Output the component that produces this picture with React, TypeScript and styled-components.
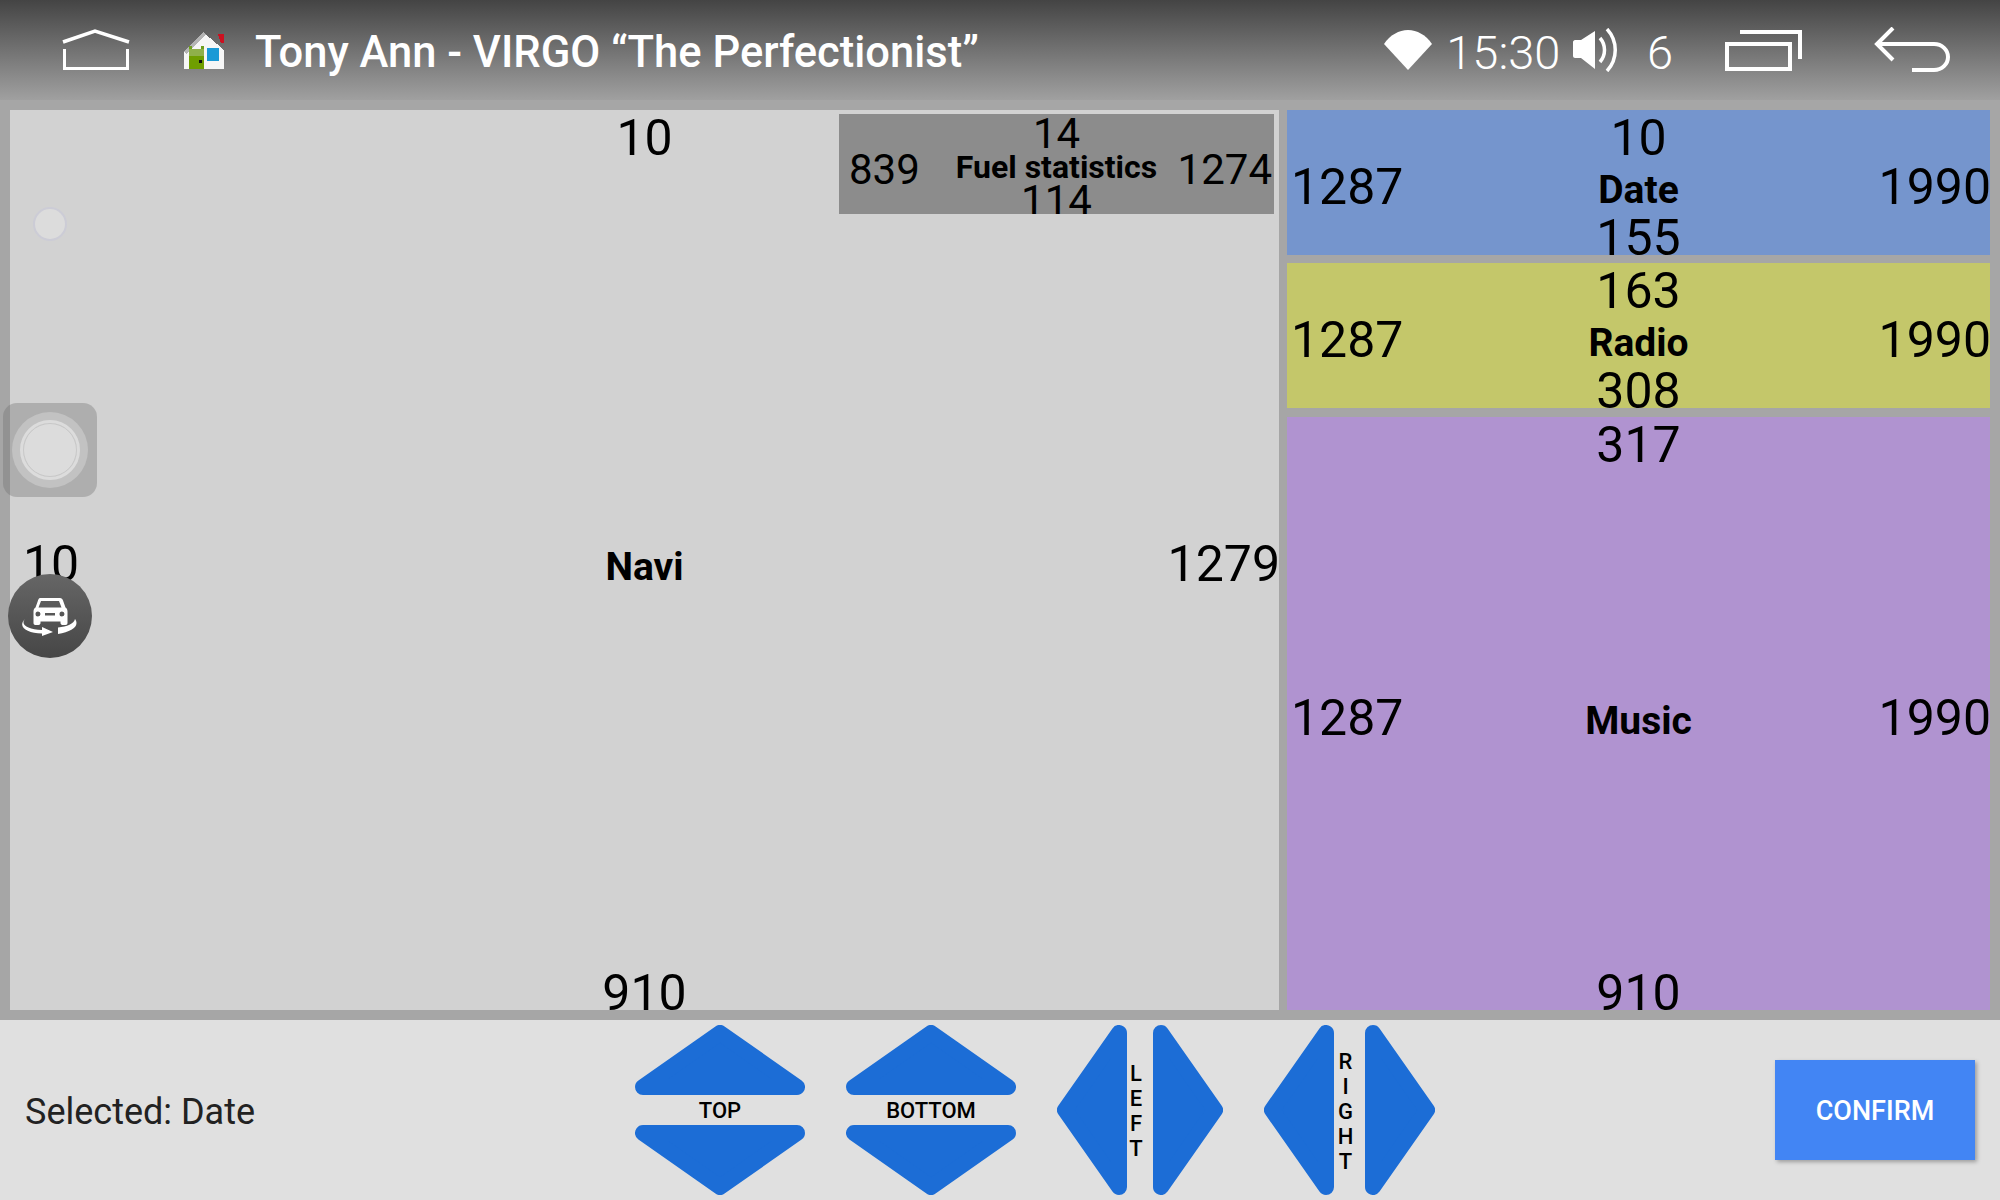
import React from 'react';
import styled, { createGlobalStyle } from 'styled-components';

const GlobalStyle = createGlobalStyle`
  html, body {
    margin: 0;
    padding: 0;
    background: #a6a6a6;
  }
  body {
    font-family: Roboto, "Liberation Sans", sans-serif;
  }
`;

const BLUE = '#1c6dd6';

interface Bounds {
  top: string;
  left: string;
  right: string;
  bottom: string;
}

const HomeIcon = () => (
  <svg width="68" height="42" viewBox="0 0 68 42" fill="none" stroke="#fff" strokeWidth="3">
    <path d="M1 13L33 2l34 11" strokeWidth="3.500" />
    <path d="M2.500 20v19.500h63V20" />
  </svg>
);

const AppIcon = () => (
  <svg width="42" height="38" viewBox="0 0 42 38" shapeRendering="crispEdges">
    <path d="M0 38V20L19 1l21 18v19z" fill="#f6f6f6" />
    <path d="M0 20L19 1l3 3L2 23z" fill="#b4b4b4" />
    <rect x="5" y="18" width="15" height="7" fill="#8fb04a" />
    <rect x="5" y="15" width="3" height="3" fill="#6f9e1e" />
    <rect x="17" y="15" width="3" height="3" fill="#6f9e1e" />
    <rect x="5" y="25" width="15" height="13" fill="#6f9e00" />
    <rect x="15" y="29" width="3" height="3" fill="#111" />
    <rect x="23" y="17" width="12" height="13" fill="#1a9ad6" />
    <path d="M34 3h6v9h-3z" fill="#cc1020" />
  </svg>
);

const WifiIcon = () => (
  <svg width="48" height="40" viewBox="0 0 48 40">
    <path d="M0 14C6 5 15 0 24 0s18 5 24 14L24 40z" fill="#fff" />
  </svg>
);

const VolumeIcon = () => (
  <svg width="47" height="44" viewBox="0 0 47 44" fill="none">
    <path d="M0 14c0-1 1-2 2-2h6L22 3v38L8 30H2c-1 0-2-1-2-2z" fill="#fff" />
    <path d="M27 10c6 7 6 17 0 24" stroke="#fff" strokeWidth="3.500" />
    <path d="M34 1c11 12 11 30 0 42" stroke="#fff" strokeWidth="3.500" />
  </svg>
);

const RecentsIcon = () => (
  <svg width="78" height="42" viewBox="0 0 78 42" fill="none" stroke="#fff" strokeWidth="4">
    <rect x="3" y="15" width="63" height="25" />
    <path d="M16 3h60v27" />
  </svg>
);

const BackIcon = () => (
  <svg width="76" height="46" viewBox="0 0 76 46" fill="none" stroke="#fff" strokeWidth="4">
    <path d="M19 1L3 17l16 16" />
    <path d="M3 17h57c8 0 14 6 14 13s-6 13-14 13H38" />
  </svg>
);

const CarIcon = () => (
  <svg width="56" height="40" viewBox="0 0 56 40" fill="#fff">
    <path
      fillRule="evenodd"
      d="M18 2h20c1.500 0 2.500 1 3 2.500l2.500 7c1.500 1 2 2.500 2 4V27c0 1-.7 2-2 2h-3c-1 0-2-1-2-2v-1.500H18.500V27c0 1-1 2-2 2h-3c-1.300 0-2-1-2-2V15.500c0-1.500.5-3 2-4L16 4.500C16.500 3 17 2 18 2zm1 3l-2.500 6.500h23L37 5zm-3 10.500a2.500 2.500 0 100 5 2.500 2.500 0 000-5zm24 0a2.500 2.500 0 100 5 2.500 2.500 0 000-5zM23 17v2.500h10V17z"
    />
    <path d="M3 23C-2 29 6 33 20 34v-3l11 5-11 4v-2.500C5 37-5 31 3 23z" />
    <path d="M53 23c5 7-3 13-17 15v-6.500c9-1 16-3.500 17-8.500z" />
  </svg>
);

// rounded triangles, the round join of the stroke gives the soft corners
const arrowPoints: Record<string, { box: string; points: string }> = {
  up: { box: '0 0 170 70', points: '85,8 162,62 8,62' },
  down: { box: '0 0 170 70', points: '8,8 162,8 85,62' },
  left: { box: '0 0 70 170', points: '8,85 62,8 62,162' },
  right: { box: '0 0 70 170', points: '8,8 62,85 8,162' },
};

const Arrow: React.FC<{ dir: 'up' | 'down' | 'left' | 'right' }> = ({ dir }) => {
  const { box, points } = arrowPoints[dir];
  const flat = dir === 'up' || dir === 'down';
  return (
    <svg width={flat ? 170 : 70} height={flat ? 70 : 170} viewBox={box}>
      <polygon points={points} fill={BLUE} stroke={BLUE} strokeWidth="16" strokeLinejoin="round" />
    </svg>
  );
};

const Bounded: React.FC<{ name: string; bounds: Bounds; small?: boolean }> = ({ name, bounds, small }) => (
  <>
    <TopValue $small={small}>{bounds.top}</TopValue>
    <LeftValue $small={small}>{bounds.left}</LeftValue>
    <Name $small={small}>{name}</Name>
    <RightValue $small={small}>{bounds.right}</RightValue>
    <BottomValue $small={small}>{bounds.bottom}</BottomValue>
  </>
);

const App: React.FC = () => {
  return (
    <Screen>
      <GlobalStyle />
      <StatusBar>
        <HomeSlot>
          <HomeIcon />
        </HomeSlot>
        <AppSlot>
          <AppIcon />
        </AppSlot>
        <Title>Tony Ann - VIRGO “The Perfectionist”</Title>
        <WifiSlot>
          <WifiIcon />
        </WifiSlot>
        <Clock>15:30</Clock>
        <VolumeSlot>
          <VolumeIcon />
        </VolumeSlot>
        <VolumeLevel>6</VolumeLevel>
        <RecentsSlot>
          <RecentsIcon />
        </RecentsSlot>
        <BackSlot>
          <BackIcon />
        </BackSlot>
      </StatusBar>

      <Editor>
        <NaviPanel>
          <Bounded name="Navi" bounds={{ top: '10', left: '10', right: '1279', bottom: '910' }} />
          <FuelPanel>
            <Bounded small name="Fuel statistics" bounds={{ top: '14', left: '839', right: '1274', bottom: '114' }} />
          </FuelPanel>
        </NaviPanel>
        <SideColumn>
          <SidePanel $color="#7595cd" $height={145}>
            <Bounded name="Date" bounds={{ top: '10', left: '1287', right: '1990', bottom: '155' }} />
          </SidePanel>
          <SidePanel $color="#c4c76a" $height={145}>
            <Bounded name="Radio" bounds={{ top: '163', left: '1287', right: '1990', bottom: '308' }} />
          </SidePanel>
          <SidePanel $color="#b093d0" $height={593}>
            <Bounded name="Music" bounds={{ top: '317', left: '1287', right: '1990', bottom: '910' }} />
          </SidePanel>
        </SideColumn>
        <SmallDot />
        <AssistButton>
          <AssistRing>
            <AssistCore />
          </AssistRing>
        </AssistButton>
        <CarButton>
          <CarIcon />
        </CarButton>
      </Editor>

      <ControlBar>
        <Selected>Selected: Date</Selected>
        <Nudges>
          <NudgeColumn>
            <Arrow dir="up" />
            <FlatLabel>TOP</FlatLabel>
            <Arrow dir="down" />
          </NudgeColumn>
          <NudgeColumn>
            <Arrow dir="up" />
            <FlatLabel>BOTTOM</FlatLabel>
            <Arrow dir="down" />
          </NudgeColumn>
          <NudgeRow>
            <Arrow dir="left" />
            <StackLabel $width={26}>LEFT</StackLabel>
            <Arrow dir="right" />
          </NudgeRow>
          <NudgeRow>
            <Arrow dir="left" />
            <StackLabel $width={31}>RIGHT</StackLabel>
            <Arrow dir="right" />
          </NudgeRow>
        </Nudges>
        <ConfirmButton>CONFIRM</ConfirmButton>
      </ControlBar>
    </Screen>
  );
};

export default App;

const Screen = styled.div`
  width: 2000px;
  height: 1200px;
  overflow: hidden;
  display: flex;
  flex-direction: column;
`;

const StatusBar = styled.header`
  height: 100px;
  flex: none;
  display: flex;
  align-items: center;
  color: #fff;
  background: linear-gradient(#444444, #a0a0a0);
`;

const IconSlot = styled.div`
  display: flex;
  flex: none;
`;

const HomeSlot = styled(IconSlot)`
  margin: 0 0 0 62px;
`;

const AppSlot = styled(IconSlot)`
  margin: 0 0 0 54px;
`;

const Title = styled.div`
  margin: 4px 0 0 29px;
  font-size: 43.500px;
  font-weight: 500;
  white-space: nowrap;
`;

const WifiSlot = styled(IconSlot)`
  margin-left: auto;
`;

const Clock = styled.div`
  margin: 4px 0 0 14px;
  font-size: 47px;
  font-weight: 300;
`;

const VolumeSlot = styled(IconSlot)`
  margin-left: 13px;
`;

const VolumeLevel = styled.div`
  margin: 4px 0 0 26.500px;
  font-size: 47px;
  font-weight: 300;
`;

const RecentsSlot = styled(IconSlot)`
  margin-left: 51px;
`;

const BackSlot = styled(IconSlot)`
  margin: 0 50px 0 72px;
`;

const Editor = styled.main`
  position: relative;
  height: 920px;
  flex: none;
  box-sizing: border-box;
  padding: 10px;
  display: grid;
  grid-template-columns: 1269px 703px;
  column-gap: 8px;
  background: #a6a6a6;
`;

const Panel = styled.section`
  display: grid;
  overflow: hidden;
  color: #000;
`;

const SideColumn = styled.div`
  display: flex;
  flex-direction: column;
  gap: 8px;
`;

const SidePanel = styled(Panel)<{ $color: string; $height: number }>`
  height: ${(p) => p.$height}px;
  background: ${(p) => p.$color};

  &:last-child {
    margin-top: 1px;
  }
`;

const FuelPanel = styled(Panel)`
  grid-area: 1 / 1;
  justify-self: end;
  align-self: start;
  width: 435px;
  height: 100px;
  margin: 4px 5px 0 0;
  background: #8c8c8c;
`;

// all the values of a panel share the one grid cell and sit on its edges
const Value = styled.div<{ $small?: boolean }>`
  grid-area: 1 / 1;
  font-size: ${(p) => (p.$small ? 42 : 50)}px;
  line-height: ${(p) => (p.$small ? 46 : 58)}px;
  white-space: nowrap;
`;

const TopValue = styled(Value)`
  justify-self: center;
  align-self: start;
  margin-top: ${(p) => (p.$small ? -3 : -1)}px;
`;

const BottomValue = styled(Value)`
  justify-self: center;
  align-self: end;
  margin-bottom: ${(p) => (p.$small ? -10 : -12)}px;
`;

const LeftValue = styled(Value)`
  justify-self: start;
  align-self: center;
  margin-left: ${(p) => (p.$small ? 10 : 4)}px;
  margin-top: ${(p) => (p.$small ? 12 : 8)}px;
`;

const RightValue = styled(Value)`
  justify-self: end;
  align-self: center;
  margin-right: ${(p) => (p.$small ? 2 : -1)}px;
  margin-top: ${(p) => (p.$small ? 12 : 8)}px;
`;

const NaviPanel = styled(Panel)`
  background: #d2d2d2;

  > ${LeftValue} {
    margin-left: 13px;
  }
`;

const Name = styled.div<{ $small?: boolean }>`
  grid-area: 1 / 1;
  justify-self: center;
  align-self: center;
  margin-top: ${(p) => (p.$small ? 6 : 14)}px;
  font-size: ${(p) => (p.$small ? 32 : 39)}px;
  font-weight: 700;
  white-space: nowrap;
`;

const SmallDot = styled.div`
  position: absolute;
  left: 33px;
  top: 107px;
  width: 34px;
  height: 34px;
  box-sizing: border-box;
  border-radius: 50%;
  background: #dcdcdc;
  border: 2px solid #ccccd6;
`;

const AssistButton = styled.div`
  position: absolute;
  left: 3px;
  top: 303px;
  width: 94px;
  height: 94px;
  border-radius: 14px;
  background: rgba(110, 110, 110, 0.35);
  display: flex;
  align-items: center;
  justify-content: center;
`;

const AssistRing = styled.div`
  width: 76px;
  height: 76px;
  border-radius: 50%;
  background: #c2c2c2;
  display: flex;
  align-items: center;
  justify-content: center;
`;

const AssistCore = styled.div`
  width: 52px;
  height: 52px;
  border-radius: 50%;
  background: #dcdcdc;
  border: 1px solid #c8c8c8;
  outline: 3px solid #dcdcdc;
`;

const CarButton = styled.div`
  position: absolute;
  left: 8px;
  top: 474px;
  width: 84px;
  height: 84px;
  border-radius: 50%;
  background: linear-gradient(#666666, #464646);
  display: flex;
  align-items: center;
  justify-content: center;
`;

const ControlBar = styled.footer`
  flex: 1;
  display: flex;
  align-items: center;
  padding: 0 25px;
  background: #e0e0e0;
`;

const Selected = styled.div`
  flex: 0 0 610px;
  margin-top: 3px;
  font-size: 36px;
  color: #222;
`;

const Nudges = styled.div`
  display: flex;
  gap: 41px;
`;

const NudgeColumn = styled.div`
  display: flex;
  flex-direction: column;
  align-items: center;
`;

const NudgeRow = styled.div`
  display: flex;
  align-items: center;
`;

const FlatLabel = styled.div`
  height: 30px;
  line-height: 32px;
  font-size: 22px;
  font-weight: 500;
  color: #000;
`;

// one letter per line, the label is a little left of the gap's middle
const StackLabel = styled.div<{ $width: number }>`
  box-sizing: border-box;
  width: ${(p) => p.$width}px;
  padding: 2px ${(p) => (p.$width - 16) / 2 + 4}px 0 ${(p) => (p.$width - 16) / 2 - 4}px;
  font-size: 22px;
  line-height: 25px;
  font-weight: 500;
  color: #000;
  text-align: center;
  word-break: break-all;
`;

const ConfirmButton = styled.button`
  margin-left: auto;
  width: 200px;
  height: 100px;
  padding: 2px 0 0;
  border: none;
  border-radius: 0;
  background: #4285f4;
  color: #fff;
  font-family: inherit;
  font-size: 27px;
  font-weight: 500;
  box-shadow: 2px 2px 4px rgba(0, 0, 0, 0.3);
`;
